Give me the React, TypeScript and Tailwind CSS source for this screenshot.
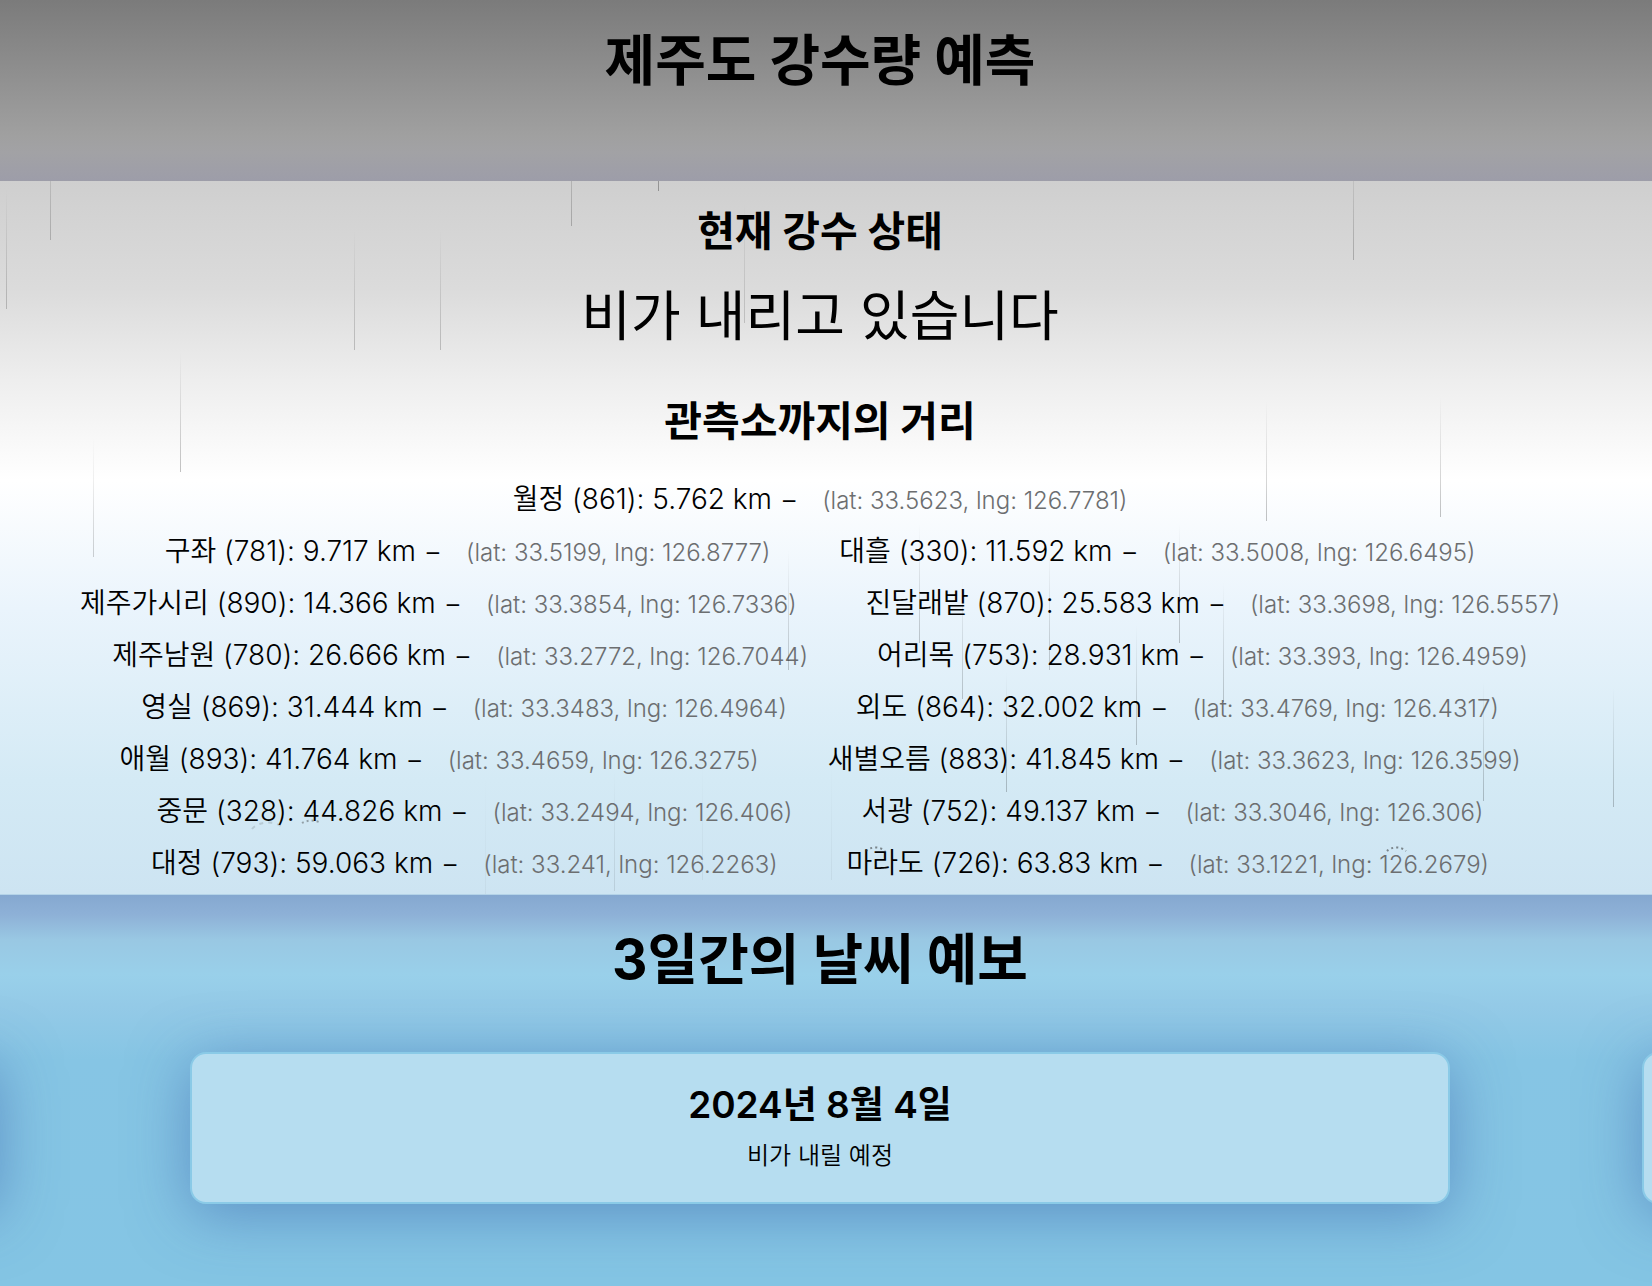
type Station = {
  name: string;
  id: number;
  km: string;
  lat: string;
  lng: string;
};

const rows: Station[][] = [
  [{ name: "월정", id: 861, km: "5.762", lat: "33.5623", lng: "126.7781" }],
  [
    { name: "구좌", id: 781, km: "9.717", lat: "33.5199", lng: "126.8777" },
    { name: "대흘", id: 330, km: "11.592", lat: "33.5008", lng: "126.6495" },
  ],
  [
    { name: "제주가시리", id: 890, km: "14.366", lat: "33.3854", lng: "126.7336" },
    { name: "진달래밭", id: 870, km: "25.583", lat: "33.3698", lng: "126.5557" },
  ],
  [
    { name: "제주남원", id: 780, km: "26.666", lat: "33.2772", lng: "126.7044" },
    { name: "어리목", id: 753, km: "28.931", lat: "33.393", lng: "126.4959" },
  ],
  [
    { name: "영실", id: 869, km: "31.444", lat: "33.3483", lng: "126.4964" },
    { name: "외도", id: 864, km: "32.002", lat: "33.4769", lng: "126.4317" },
  ],
  [
    { name: "애월", id: 893, km: "41.764", lat: "33.4659", lng: "126.3275" },
    { name: "새별오름", id: 883, km: "41.845", lat: "33.3623", lng: "126.3599" },
  ],
  [
    { name: "중문", id: 328, km: "44.826", lat: "33.2494", lng: "126.406" },
    { name: "서광", id: 752, km: "49.137", lat: "33.3046", lng: "126.306" },
  ],
  [
    { name: "대정", id: 793, km: "59.063", lat: "33.241", lng: "126.2263" },
    { name: "마라도", id: 726, km: "63.83", lat: "33.1221", lng: "126.2679" },
  ],
];

// Rain drops: x, y of the lower tip, opacity, measured from the section's top left.
const drops: [number, number, number][] = [
  [6, 128, 0.2],
  [50, 59, 0.2],
  [354, 169, 0.2],
  [440, 169, 0.2],
  [571, 45, 0.22],
  [658, 10, 0.3],
  [744, 142, 0.16],
  [1353, 79, 0.22],
  [180, 291, 0.24],
  [93, 376, 0.18],
  [1266, 340, 0.24],
  [1440, 336, 0.24],
  [788, 489, 0.2],
  [919, 462, 0.2],
  [962, 518, 0.2],
  [1049, 489, 0.2],
  [1179, 462, 0.22],
  [1223, 521, 0.2],
  [1136, 564, 0.22],
  [1006, 611, 0.22],
  [1483, 620, 0.22],
  [1613, 626, 0.22],
  [485, 714, 0.04],
  [614, 710, 0.1],
  [702, 699, 0.05],
  [831, 699, 0.05],
];

function Rain() {
  return (
    <svg className="pointer-events-none absolute inset-0 h-full w-full" aria-hidden="true">
      <defs>
        <linearGradient id="drop" x1="0" y1="0" x2="0" y2="1">
          <stop offset="0" stopColor="#000" stopOpacity="0" />
          <stop offset="1" stopColor="#000" stopOpacity="1" />
        </linearGradient>
      </defs>
      {drops.map(([x, y, o]) => (
        <rect key={`${x}-${y}`} x={x} y={y - 120} width="1" height="120" fill="url(#drop)" opacity={o} />
      ))}
      <g fill="none" stroke="#333" strokeWidth="2" strokeDasharray="2 3">
        <path d="M866 670a12 9 0 0 1 19 0" strokeOpacity="0.55" />
        <path d="M1387 670a12 9 0 0 1 19 0" strokeOpacity="0.55" />
        <path d="M252 648a18 12 0 0 1 32 0" strokeOpacity="0.16" strokeDasharray="4 5" />
        <path d="M302 642a14 9 0 0 1 19 0" strokeOpacity="0.4" />
      </g>
    </svg>
  );
}

function StationItem({ s }: { s: Station }) {
  return (
    <li className="flex items-baseline gap-6 whitespace-nowrap">
      <span className="text-[28px]">
        {s.name} ({s.id}): {s.km} km −
      </span>
      <span className="text-[24px] text-[#6c6e70]">
        (lat: {s.lat}, lng: {s.lng})
      </span>
    </li>
  );
}

const cardClass =
  "w-[1260px] max-w-[77%] flex-none rounded-2xl border-2 border-[#8acae7] bg-[#b6ddf0] shadow-[0_10px_60px_rgba(54,94,168,0.5)]";

export default function App() {
  return (
    <div className="flex min-h-screen flex-col overflow-hidden bg-[#84c5e4] font-[Inter,'Noto_Sans_CJK_KR',sans-serif] text-black">
      <header className="h-[181px] bg-[linear-gradient(180deg,#7b7b7b_0%,#a0a0a0_75%,#a2a2a5_84%,#9d9da9_100%)] pt-5 pr-3">
        <h1 className="text-center text-[55px] leading-[80px] font-bold">제주도 강수량 예측</h1>
      </header>

      <main className="relative border-b border-[#b4d3e8] bg-[linear-gradient(180deg,#cfcfcf_0%,#dbdbdb_15%,#eeeeee_28%,#ffffff_42%,#eaf4fc_60%,#d4eaf5_84%,#cde4f2_100%)] pt-5 pr-3 pb-1 text-center">
        <h2 className="text-[41px] leading-[60px] font-bold">현재 강수 상태</h2>
        <p className="mt-4 text-[54px] leading-[80px] font-normal">비가 내리고 있습니다</p>
        <h2 className="mt-[34px] text-[41px] leading-[60px] font-bold">관측소까지의 거리</h2>
        <ul className="mt-[23px]">
          {rows.map((row) => (
            <li key={row[0].id}>
              <ul className="flex justify-center gap-[69px] leading-[51px] font-[350]">
                {row.map((s) => (
                  <StationItem key={s.id} s={s} />
                ))}
              </ul>
            </li>
          ))}
        </ul>
        <Rain />
      </main>

      <section className="flex-1 bg-[linear-gradient(180deg,#85a8d0_0px,#8eb1d7_20px,#99c8e3_45px,#99d0ea_80px,#94cae7_110px,#86c5e4_165px,#84c5e4_100%)] pt-6 pr-3">
        <h2 className="text-center text-[55px] leading-[80px] font-bold">3일간의 날씨 예보</h2>
        <div className="mt-[53px] flex justify-center gap-48">
          <div className={cardClass} aria-hidden="true" />
          <article className={cardClass}>
            <div className="py-6 text-center">
              <h3 className="text-[37px] leading-[54px] font-semibold">2024년 8월 4일</h3>
              <p className="mt-[2px] text-[24px] leading-[44px] font-[350]">비가 내릴 예정</p>
            </div>
          </article>
          <div className={cardClass} aria-hidden="true" />
        </div>
      </section>
    </div>
  );
}
